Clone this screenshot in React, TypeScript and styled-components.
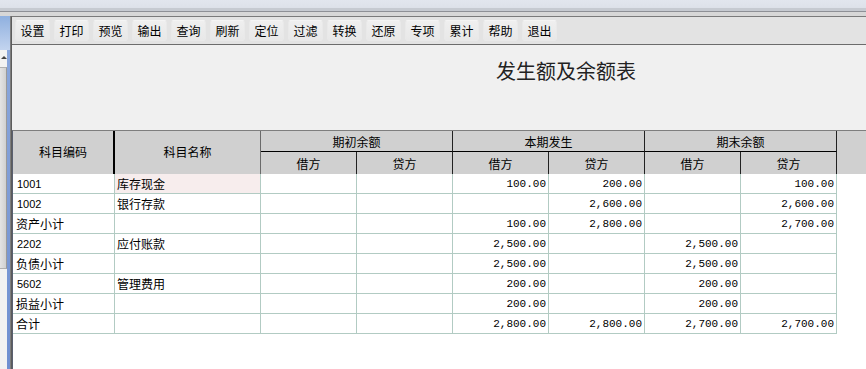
import styled, { createGlobalStyle } from "styled-components";

const GlobalStyle = createGlobalStyle`
  html, body {
    margin: 0;
    padding: 0;
    height: 100%;
    overflow: hidden;
    background: #f0f0f0;
  }
  #root {
    height: 100%;
  }
`;

const CJK = `"Noto Sans CJK SC", "Noto Sans", sans-serif`;
const COLUMNS = "102px 146px 96px 96px 96px 96px 96px 96px 1fr";

const buttons = ["设置", "打印", "预览", "输出", "查询", "刷新", "定位", "过滤", "转换", "还原", "专项", "累计", "帮助", "退出"];

interface Row {
  code: string;
  name?: string;
  values: string[];
  selected?: boolean;
}

const rows: Row[] = [
  { code: "1001", name: "库存现金", values: ["", "", "100.00", "200.00", "", "100.00"], selected: true },
  { code: "1002", name: "银行存款", values: ["", "", "", "2,600.00", "", "2,600.00"] },
  { code: "资产小计", values: ["", "", "100.00", "2,800.00", "", "2,700.00"] },
  { code: "2202", name: "应付账款", values: ["", "", "2,500.00", "", "2,500.00", ""] },
  { code: "负债小计", values: ["", "", "2,500.00", "", "2,500.00", ""] },
  { code: "5602", name: "管理费用", values: ["", "", "200.00", "", "200.00", ""] },
  { code: "损益小计", values: ["", "", "200.00", "", "200.00", ""] },
  { code: "合计", values: ["", "", "2,800.00", "2,800.00", "2,700.00", "2,700.00"] },
];

const groups = ["期初余额", "本期发生", "期末余额"];

export default function App() {
  return (
    <>
      <GlobalStyle />
      <Window>
        <TitleStrip />
        <Body>
          <SidePane>
            <BlueHead />
            <SideLower>
              <ScrollBar>
                <Arrow />
                <Thumb />
              </ScrollBar>
              <BlueEdge />
            </SideLower>
          </SidePane>
          <Main>
            <Toolbar>
              {buttons.map((b) => (
                <ToolButton key={b}>{b}</ToolButton>
              ))}
            </Toolbar>
            <Content>
              <ReportTitle>发生额及余额表</ReportTitle>
              <Grid>
                <Header>
                  <HeadCell $row="1 / 3" $col="1" $thick>科目编码</HeadCell>
                  <HeadCell $row="1 / 3" $col="2">科目名称</HeadCell>
                  {groups.map((g, i) => (
                    <GroupCell key={g} style={{ gridColumn: `${3 + i * 2} / ${5 + i * 2}` }}>
                      {g}
                    </GroupCell>
                  ))}
                  {groups.flatMap((g, i) => [
                    <SubCell key={g + "j"} style={{ gridColumn: `${3 + i * 2}` }}>借方</SubCell>,
                    <SubCell key={g + "d"} style={{ gridColumn: `${4 + i * 2}` }}>贷方</SubCell>,
                  ])}
                  <HeadFiller />
                </Header>
                {rows.map((r) => (
                  <DataRow key={r.code}>
                    <CodeCell $cjk={!/^\d+$/.test(r.code)}>{r.code}</CodeCell>
                    <NameCell $selected={r.selected}>{r.name ?? ""}</NameCell>
                    {r.values.map((v, i) => (
                      <AmountCell key={i}>{v}</AmountCell>
                    ))}
                    <Blank />
                  </DataRow>
                ))}
              </Grid>
            </Content>
          </Main>
        </Body>
      </Window>
    </>
  );
}

const Window = styled.div`
  display: flex;
  flex-direction: column;
  height: 100vh;
  font-family: ${CJK};
  color: #000;
`;

const TitleStrip = styled.div`
  height: 16px;
  flex: none;
  background: linear-gradient(
    to bottom,
    #e2e6ee 0px,
    #dde1e9 8px,
    #c6cad1 8px,
    #c6cad1 11px,
    #8e9096 11px,
    #8e9096 12px,
    #d7d7d7 12px,
    #d7d7d7 16px
  );
`;

const Body = styled.div`
  flex: 1;
  display: flex;
  min-height: 0;
`;

const SidePane = styled.div`
  width: 10px;
  flex: none;
  display: flex;
  flex-direction: column;
  border-right: 1px solid #7d7d7d;
`;

const BlueHead = styled.div`
  height: 34px;
  flex: none;
  background: linear-gradient(to bottom, #8fb0df, #c3d4ef);
`;

const SideLower = styled.div`
  flex: 1;
  display: flex;
`;

const ScrollBar = styled.div`
  width: 7px;
  background: #f2f2f2;
  display: flex;
  flex-direction: column;
`;

const Arrow = styled.div`
  margin: 6px 0 0 1px;
  width: 0;
  height: 0;
  border-left: 3px solid transparent;
  border-right: 3px solid transparent;
  border-bottom: 3px solid #444;
`;

const Thumb = styled.div`
  margin-top: 8px;
  height: 200px;
  background: linear-gradient(to right, #e4e4e4, #d0d0d0);
  border-right: 1px solid #9a9a9a;
  border-top: 1px solid #b0b0b0;
  border-bottom: 1px solid #b0b0b0;
`;

const BlueEdge = styled.div`
  width: 3px;
  background: linear-gradient(to bottom, #8aa7dc, #6f8fd0);
`;

const Main = styled.div`
  flex: 1;
  display: flex;
  flex-direction: column;
  border-top: 1px solid #7a7a7a;
  border-left: 1px solid #5c5c5c;
  min-width: 0;
`;

const Toolbar = styled.div`
  height: 28px;
  box-sizing: border-box;
  flex: none;
  display: flex;
  align-items: center;
  gap: 4px;
  padding-left: 3px;
  background: #e3e3e3;
  border-bottom: 1px solid #6c6c6c;
`;

const ToolButton = styled.div`
  width: 35px;
  height: 21px;
  box-sizing: border-box;
  display: flex;
  align-items: center;
  justify-content: center;
  font-size: 12px;
  background: linear-gradient(to bottom, #efefef, #e8e8e8);
  border: 1px solid #e9e9e9;
  border-top-color: #f4f4f4;
  border-radius: 3px;
`;

const Content = styled.div`
  flex: 1;
  display: flex;
  flex-direction: column;
  background: #f0f0f0;
  min-height: 0;
`;

const ReportTitle = styled.div`
  height: 85px;
  box-sizing: border-box;
  flex: none;
  padding: 14px 0 0 484px;
  font-size: 20px;
  line-height: 24px;
  color: #222;
`;

const Grid = styled.div`
  flex: 1;
  background: #fff;
  border-top: 1px solid #7e7e7e;
  border-left: 1px solid #5a6070;
`;

const Header = styled.div`
  display: grid;
  grid-template-columns: ${COLUMNS};
  grid-template-rows: 21px 22px;
  background: #d0d0d0;
  font-size: 12px;
`;

const HeadCell = styled.div<{ $row: string; $col: string; $thick?: boolean }>`
  grid-row: ${(p) => p.$row};
  grid-column: ${(p) => p.$col};
  display: flex;
  align-items: center;
  justify-content: center;
  box-sizing: border-box;
  border-right: ${(p) => (p.$thick ? "2px solid #000" : "1px solid #6a6a6a")};
  padding-bottom: 2px;
`;

const GroupCell = styled.div`
  grid-row: 1;
  display: flex;
  align-items: center;
  justify-content: center;
  box-sizing: border-box;
  border-right: 1px solid #222;
  border-bottom: 1px solid #000;
`;

const SubCell = styled.div`
  grid-row: 2;
  display: flex;
  align-items: center;
  justify-content: center;
  box-sizing: border-box;
  border-right: 1px solid #222;
`;

const HeadFiller = styled.div`
  grid-row: 1 / 3;
  grid-column: 9;
`;

const DataRow = styled.div`
  display: grid;
  grid-template-columns: ${COLUMNS};
  height: 20px;
`;

const Cell = styled.div`
  box-sizing: border-box;
  border-right: 1px solid #b2cbc3;
  border-bottom: 1px solid #b2cbc3;
  display: flex;
  align-items: center;
  white-space: nowrap;
  overflow: hidden;
`;

const CodeCell = styled(Cell)<{ $cjk: boolean }>`
  padding-left: ${(p) => (p.$cjk ? "3px" : "4px")};
  font-family: ${(p) => (p.$cjk ? CJK : `"Liberation Sans", sans-serif`)};
  font-size: ${(p) => (p.$cjk ? "12px" : "11px")};
`;

const NameCell = styled(Cell)<{ $selected?: boolean }>`
  padding-left: 2px;
  font-size: 12px;
  background: ${(p) => (p.$selected ? "#f7eded" : "#fff")};
`;

const AmountCell = styled(Cell)`
  justify-content: flex-end;
  padding-right: 2px;
  font-family: "Liberation Mono", monospace;
  font-size: 11px;
`;

const Blank = styled.div``;
